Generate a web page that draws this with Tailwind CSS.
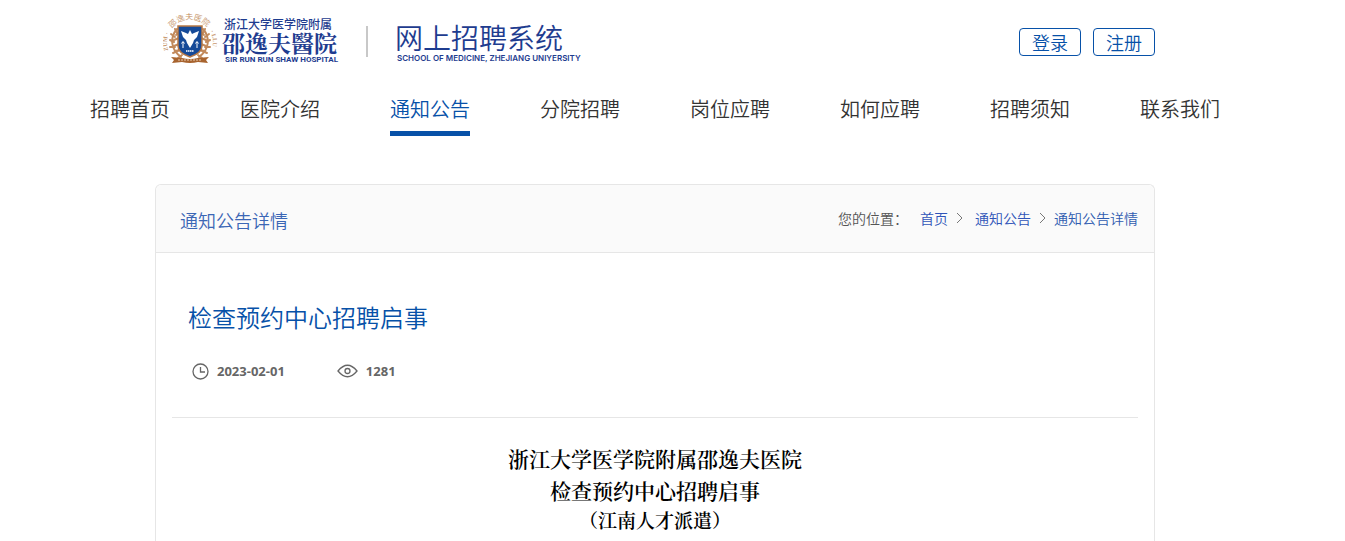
<!DOCTYPE html>
<html lang="zh-CN">
<head>
  <meta charset="UTF-8" />
  <meta name="viewport" content="width=device-width, initial-scale=1.0" />
  <title>通知公告详情 - 网上招聘系统</title>
  <script src="https://cdn.jsdelivr.net/npm/@tailwindcss/browser@4"></script>
</head>
<body class="bg-white pr-[35px] text-[#333] font-[350] font-['Noto_Sans_CJK_SC',sans-serif]">
  <header>
    <div class="max-w-[1000px] mx-auto h-20 flex items-start justify-between">
      <a href="#" class="ml-2 mt-3" aria-label="首页">
        <svg width="430" height="56" viewBox="0 0 430 56">
          <!-- emblem -->
          <defs><path id="ring" d="M7 42A23 23 0 1 1 47 42" /></defs>
          <g fill="#c99b73" font-size="7" font-weight="700">
            <text font-family="Liberation Serif, serif" font-size="6"><textPath href="#ring" startOffset="4">ZUM ·</textPath></text>
            <text font-family="Noto Sans CJK SC, sans-serif" font-size="8" font-weight="400"><textPath href="#ring" startOffset="27">邵逸夫医院</textPath></text>
            <text font-family="Liberation Serif, serif" font-size="6"><textPath href="#ring" startOffset="72">· LLU</textPath></text>
          </g>
          <g fill="none" stroke="#c28a5c" stroke-linecap="round">
            <path d="M14 17C7 25 7 37 18 45M40 17C47 25 47 37 36 45" stroke-width="2" />
            <path d="M12 17l2 4M8 22l4 3M7 28l4 2M7 35l5 0M10 41l5-2M15 46l4-3M17 20l-4 3M16 26l-5 2M16 32l-5 2M17 38l-5 1M42 17l-2 4M46 22l-4 3M47 28l-4 2M47 35l-5 0M44 41l-5-2M39 46l-4-3M37 20l4 3M38 26l5 2M38 32l5 2M37 38l5 1" stroke-width="2" />
          </g>
          <path d="M8 45l11 1q8 2 16 0l11-1-3 3 2 3-10-1q-8 2-16 0l-10 1 2-3z" fill="#a8642f" />
          <path d="M15 48h24" stroke="#e9cdb4" stroke-dasharray="2 1" />
          <path d="M15 14h24v20q0 7-12 11q-12-4-12-11z" fill="#164a98" stroke="#b87946" stroke-width="1.5" />
          <path d="M18 19l5 2 2 1 2-4 2 4 2-1 5-2-2 6-3 3-1 3-3 5-3-5-1-3-3-3z" fill="#fff" />
          <path d="M20 36v-6M18.500 31.500l1.500-2 1.500 2M34 36v-6M32.500 31.500l1.500-2 1.500 2" stroke="#fff" fill="none" />
          <path d="M23 39h8" stroke="#c9d6ea" stroke-width="2" stroke-dasharray="1.500 .5" />
          <!-- hospital name -->
          <g fill="#1e3c8f">
            <text x="61" y="17" font-family="Noto Sans CJK SC, sans-serif" font-size="12" font-weight="500">浙江大学医学院附属</text>
            <text x="59" y="40" font-family="STKaiti, KaiTi, Noto Serif CJK SC, Noto Sans CJK SC, serif" font-size="23" font-weight="700">邵逸夫醫院</text>
            <text x="62" y="50" font-family="Roboto, sans-serif" font-size="8" font-weight="700">SIR RUN RUN SHAW HOSPITAL</text>
            <text x="232" y="37" font-family="Noto Sans CJK SC, sans-serif" font-size="28" font-weight="350">网上招聘系统</text>
            <text x="234" y="49" font-family="Inter, sans-serif" font-size="8" font-weight="600">SCHOOL OF MEDICINE, ZHEJIANG UNIYERSITY</text>
          </g>
          <path d="M204 14v31" stroke="#c8c8c8" stroke-width="2" />
        </svg>
      </a>
      <div class="flex gap-3 mt-7 text-lg text-[#0751a8]">
        <button type="button" class="w-[62px] h-7 flex items-center justify-center border border-[#0751a8] rounded">登录</button>
        <button type="button" class="w-[62px] h-7 flex items-center justify-center border border-[#0751a8] rounded">注册</button>
      </div>
    </div>
    <nav class="max-w-[1200px] mx-auto grid grid-cols-8 justify-items-center text-xl">
      <a href="#" class="pt-[15px] h-14">招聘首页</a>
      <a href="#" class="pt-[15px] h-14">医院介绍</a>
      <a href="#" class="pt-[15px] h-14 border-b-5 border-[#0751a8] text-[#0751a8]">通知公告</a>
      <a href="#" class="pt-[15px] h-14">分院招聘</a>
      <a href="#" class="pt-[15px] h-14">岗位应聘</a>
      <a href="#" class="pt-[15px] h-14">如何应聘</a>
      <a href="#" class="pt-[15px] h-14">招聘须知</a>
      <a href="#" class="pt-[15px] h-14">联系我们</a>
    </nav>
  </header>

  <main class="max-w-[1000px] mx-auto mt-12 border border-b-0 border-[#e6e6e6] rounded-t-md">
    <div class="h-[68px] px-4 pb-[2px] flex items-center justify-between bg-[#fafafa] border-b border-[#e6e6e6] rounded-t-md">
      <h2 class="pl-2 pt-1 text-lg text-[#3b66b5]">通知公告详情</h2>
      <div class="flex items-center text-sm text-[#555]">
        <span class="mr-3">您的位置：</span>
        <a href="#" class="text-[#2f54b8]">首页</a>
        <svg class="ml-2 mr-3" width="7" height="10" viewBox="0 0 7 10" fill="none" stroke="#777"><path d="M1 0l5 5-5 5" /></svg>
        <a href="#" class="text-[#2f54b8]">通知公告</a>
        <svg class="mx-2" width="7" height="10" viewBox="0 0 7 10" fill="none" stroke="#777"><path d="M1 0l5 5-5 5" /></svg>
        <a href="#" class="text-[#2f5cb0]">通知公告详情</a>
      </div>
    </div>

    <article class="px-4 pt-12 pb-8">
      <h1 class="pl-4 text-2xl text-[#0751a8]">检查预约中心招聘启事</h1>
      <div class="flex items-center pl-5 mt-6 pb-8 border-b border-[#e6e6e6] text-[13px] leading-7 font-bold text-[#666] font-['Open_Sans',sans-serif]">
        <svg class="mr-2" width="17" height="17" viewBox="0 0 17 17" fill="none" stroke="#666" stroke-width="1.300"><circle cx="8.500" cy="8.500" r="7.500" /><path d="M8.500 4v5H13" /></svg>
        <span>2023-02-01</span>
        <svg class="ml-[52px] mr-2" width="21" height="14" viewBox="0 0 21 14" fill="none" stroke="#666" stroke-width="1.300"><path d="M1 7Q10.500-4.500 20 7Q10.500 18.500 1 7z" /><circle cx="10.500" cy="7" r="2.500" /></svg>
        <span>1281</span>
      </div>
      <div class="pt-6 text-center text-[21px] leading-8 font-semibold text-black font-['SimSun','Noto_Serif_CJK_SC','Noto_Sans_CJK_SC',serif]">
        <p>浙江大学医学院附属邵逸夫医院</p>
        <p>检查预约中心招聘启事</p>
        <p class="text-[19px] leading-7">（江南人才派遣）</p>
      </div>
    </article>
  </main>
</body>
</html>
